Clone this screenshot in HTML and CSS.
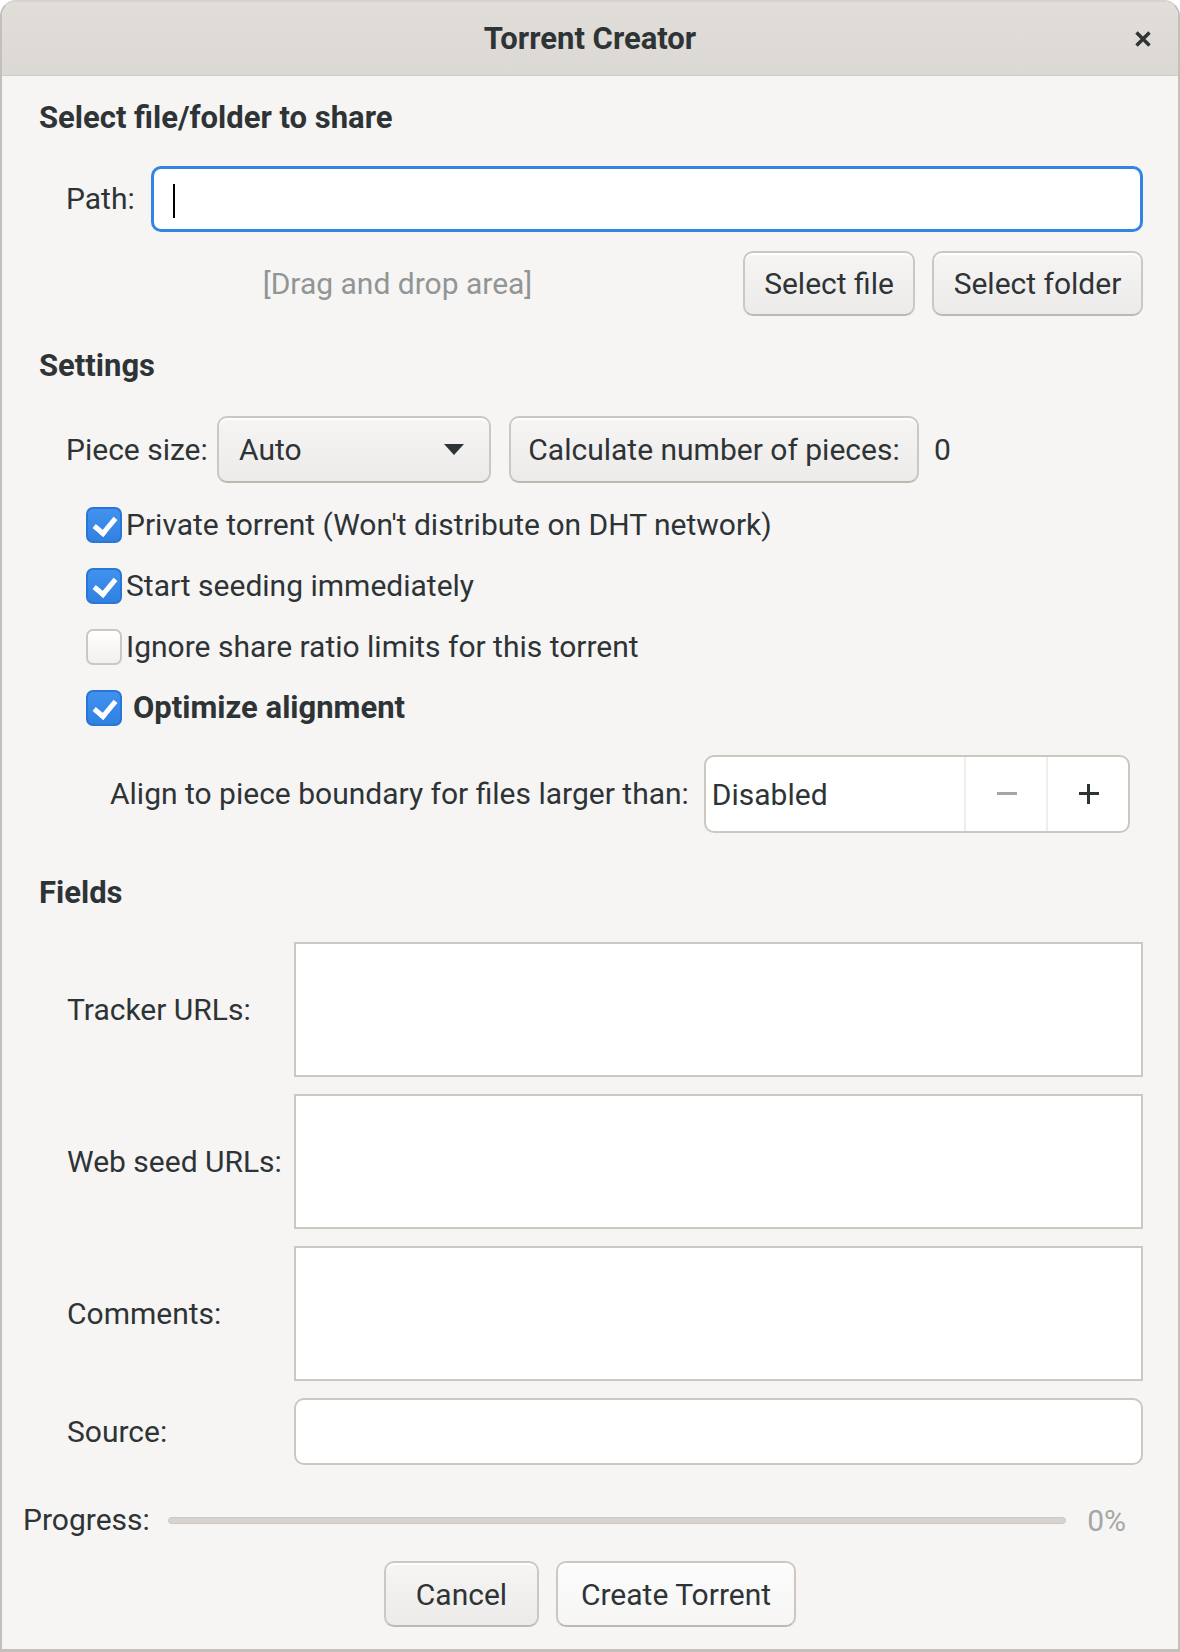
FILE: index.html
```html
<!DOCTYPE html>
<html lang="en">
<head>
<meta charset="utf-8">
<title>Torrent Creator</title>
<link rel="stylesheet" href="styles.css">
</head>
<body>
<div class="window">
  <header class="titlebar">
    <span class="title">Torrent Creator</span>
    <span class="close" aria-label="Close">
      <svg width="18" height="18" viewBox="0 0 18 18"><path d="M2.5 2.5 L15.5 15.5 M15.5 2.5 L2.5 15.5" stroke="#2e3436" stroke-width="3.5" stroke-linecap="butt" fill="none"/></svg>
    </span>
  </header>

  <main class="content">
    <h2 class="section-title first">Select file/folder to share</h2>
    <div class="path-row">
      <span class="label">Path:</span>
      <div class="entry focused"><span class="caret"></span></div>
    </div>
    <div class="drop-row">
      <div class="drop-area">[Drag and drop area]</div>
      <div class="button btn-file">Select file</div>
      <div class="button btn-folder">Select folder</div>
    </div>

    <h2 class="section-title settings">Settings</h2>
    <div class="piece-row">
      <span class="label">Piece size:</span>
      <div class="button combo"><span>Auto</span><span class="arrow"></span></div>
      <div class="button btn-calc">Calculate number of pieces:</div>
      <span class="count">0</span>
    </div>

    <div class="checks">
      <div class="check-row"><span class="check on"></span><span class="check-label">Private torrent (Won't distribute on DHT network)</span></div>
      <div class="check-row"><span class="check on"></span><span class="check-label">Start seeding immediately</span></div>
      <div class="check-row"><span class="check"></span><span class="check-label">Ignore share ratio limits for this torrent</span></div>
      <div class="check-row"><span class="check on"></span><span class="check-label group">Optimize alignment</span></div>
    </div>

    <div class="align-row">
      <span class="label">Align to piece boundary for files larger than:</span>
      <div class="spin">
        <span class="spin-value">Disabled</span>
        <span class="spin-btn minus"><span class="bar-h"></span></span>
        <span class="spin-btn plus"><span class="bar-h"></span><span class="bar-v"></span></span>
      </div>
    </div>

    <h2 class="section-title fields-title">Fields</h2>
    <div class="fields">
      <span class="label">Tracker URLs:</span><div class="textarea"></div>
      <span class="label">Web seed URLs:</span><div class="textarea"></div>
      <span class="label">Comments:</span><div class="textarea"></div>
      <span class="label">Source:</span><div class="entry source"></div>
    </div>

    <div class="progress-row">
      <span class="label">Progress:</span>
      <div class="trough"></div>
      <span class="percent">0%</span>
    </div>

    <div class="actions">
      <div class="button btn-cancel">Cancel</div>
      <div class="button btn-create">Create Torrent</div>
    </div>
  </main>
</div>
</body>
</html>
```
FILE: styles.css
```css
* { box-sizing: border-box; }

html, body {
  margin: 0;
  padding: 0;
  background: #ffffff;
}

body {
  font-family: Roboto, "Noto Sans", sans-serif;
  font-size: 30px;
  color: #2e3436;
}

.window {
  width: 1180px;
  height: 1652px;
  background: #f6f5f4;
  border: 2px solid #c3bfbb;
  border-top-color: #d6d2ce;
  border-bottom-width: 3px;
  border-radius: 16px 16px 0 0;
  display: flex;
  flex-direction: column;
  overflow: hidden;
}

/* ---------- title bar ---------- */
.titlebar {
  height: 74px;
  flex: none;
  background: linear-gradient(#e1deda, #dcd8d4);
  border-bottom: 1px solid #d0ccc7;
  display: flex;
  align-items: center;
  justify-content: center;
  position: relative;
}
.title {
  font-weight: 700;
  font-size: 31px;
}
.close {
  position: absolute;
  right: 26px;
  top: 28px;
  width: 18px;
  height: 18px;
  display: flex;
}

/* ---------- content ---------- */
.content {
  flex: 1;
  padding: 0 35px 0 37px;
  display: flex;
  flex-direction: column;
}

.section-title {
  margin: 0;
  font-size: 31px;
  font-weight: 700;
  line-height: 36px;
  height: 36px;
}
.section-title.first { margin-top: 24px; }
.section-title.settings { margin-top: 32px; }
.section-title.fields-title { margin-top: 42px; }

.label {
  white-space: nowrap;
  line-height: 36px;
}

/* entries */
.entry {
  background: #ffffff;
  border: 2px solid #cdc7c2;
  border-radius: 10px;
  height: 66px;
}
.entry.focused {
  border: 3px solid #3584e4;
  position: relative;
}
.caret {
  position: absolute;
  left: 19px;
  top: 15px;
  width: 2px;
  height: 34px;
  background: #000;
}

.path-row {
  margin-top: 30px;
  padding-left: 27px;
  display: flex;
  align-items: center;
  gap: 16px;
}
.path-row .entry { flex: 1; }

/* buttons */
.button {
  height: 65px;
  padding: 0 21px;
  display: flex;
  align-items: center;
  justify-content: center;
  white-space: nowrap;
  border: 2px solid #cdc7c2;
  border-bottom-color: #bfb8b1;
  border-radius: 10px;
  background: linear-gradient(#f6f5f4, #edebe9);
  box-shadow: inset 0 2px #ffffff;
}

.drop-row {
  margin-top: 19px;
  padding-left: 27px;
  display: flex;
  align-items: center;
}
.drop-area {
  flex: 1;
  text-align: center;
  color: #929595;
  padding-right: 14px;
}
.btn-file { width: 172px; margin-right: 17px; }
.btn-folder { width: 211px; }

/* piece size row */
.piece-row {
  margin-top: 32px;
  padding-left: 27px;
  height: 67px;
  display: flex;
  align-items: center;
}
.piece-row .label { width: 151px; }
.piece-row .button { height: 67px; }
.combo {
  width: 274px;
  justify-content: space-between;
  padding: 0 25px 0 20px;
}
.arrow {
  width: 0;
  height: 0;
  border-left: 10px solid transparent;
  border-right: 10px solid transparent;
  border-top: 11px solid #2e3436;
}
.btn-calc {
  width: 410px;
  margin-left: 18px;
}
.count { margin-left: 15px; }

/* checkboxes */
.checks {
  margin-top: 11px;
  padding-left: 47px;
  display: flex;
  flex-direction: column;
}
.check-row {
  height: 61px;
  display: flex;
  align-items: center;
}
.check {
  width: 36px;
  height: 36px;
  flex: none;
  border-radius: 7px;
  border: 2px solid #cdc7c2;
  background: linear-gradient(#ffffff, #f2f0ee);
  position: relative;
}
.check.on {
  border-color: #2a76d6;
  background: linear-gradient(#4191ee, #3181e2);
}
.check.on::after {
  content: "";
  position: absolute;
  left: 10px;
  top: 4px;
  width: 9px;
  height: 17px;
  border-right: 5px solid #ffffff;
  border-bottom: 5px solid #ffffff;
  transform: rotate(40deg);
}
.check-label {
  margin-left: 4px;
  white-space: nowrap;
}
.check-label.group {
  margin-left: 11px;
  font-weight: 700;
  font-size: 31px;
}

/* align row */
.align-row {
  margin-top: 17px;
  padding-left: 71px;
  display: flex;
  align-items: center;
  gap: 15px;
}
.spin {
  width: 426px;
  height: 78px;
  display: flex;
  background: #ffffff;
  border: 2px solid #cdc7c2;
  border-radius: 10px;
}
.spin-value {
  flex: 1;
  display: flex;
  align-items: center;
  padding-left: 6px;
}
.spin-btn {
  width: 82px;
  border-left: 2px solid #f1ede8;
  position: relative;
}
.bar-h {
  position: absolute;
  left: 31px;
  top: 35px;
  width: 20px;
  height: 3px;
  background: #2e3436;
}
.bar-v {
  position: absolute;
  left: 39.5px;
  top: 26.5px;
  width: 3px;
  height: 20px;
  background: #2e3436;
}
.minus .bar-h { background: #a4a7a7; }

/* fields */
.fields {
  margin-top: 31px;
  padding-left: 28px;
  display: grid;
  grid-template-columns: 227px 1fr;
  row-gap: 17px;
  align-items: center;
}
.textarea {
  height: 135px;
  background: #ffffff;
  border: 2px solid #cdc7c2;
}
.entry.source { height: 67px; }

/* progress */
.progress-row {
  margin: 37px 17px 0 -16px;
  height: 36px;
  display: flex;
  align-items: center;
}
.progress-row .label { width: 145px; }
.trough {
  flex: 1;
  height: 7px;
  border-radius: 4px;
  background: #d8d3cf;
  border: 1px solid #cdc7c2;
}
.percent {
  margin-left: 21px;
  color: #a4a7a7;
}

/* actions */
.actions {
  margin-top: 23px;
  display: flex;
  justify-content: center;
  gap: 17px;
  padding-right: 2px;
}
.actions .button { height: 66px; }
.btn-cancel { width: 155px; }
.btn-create {
  width: 240px;
  background: linear-gradient(#fcfcfc, #f7f6f5);
}
```
